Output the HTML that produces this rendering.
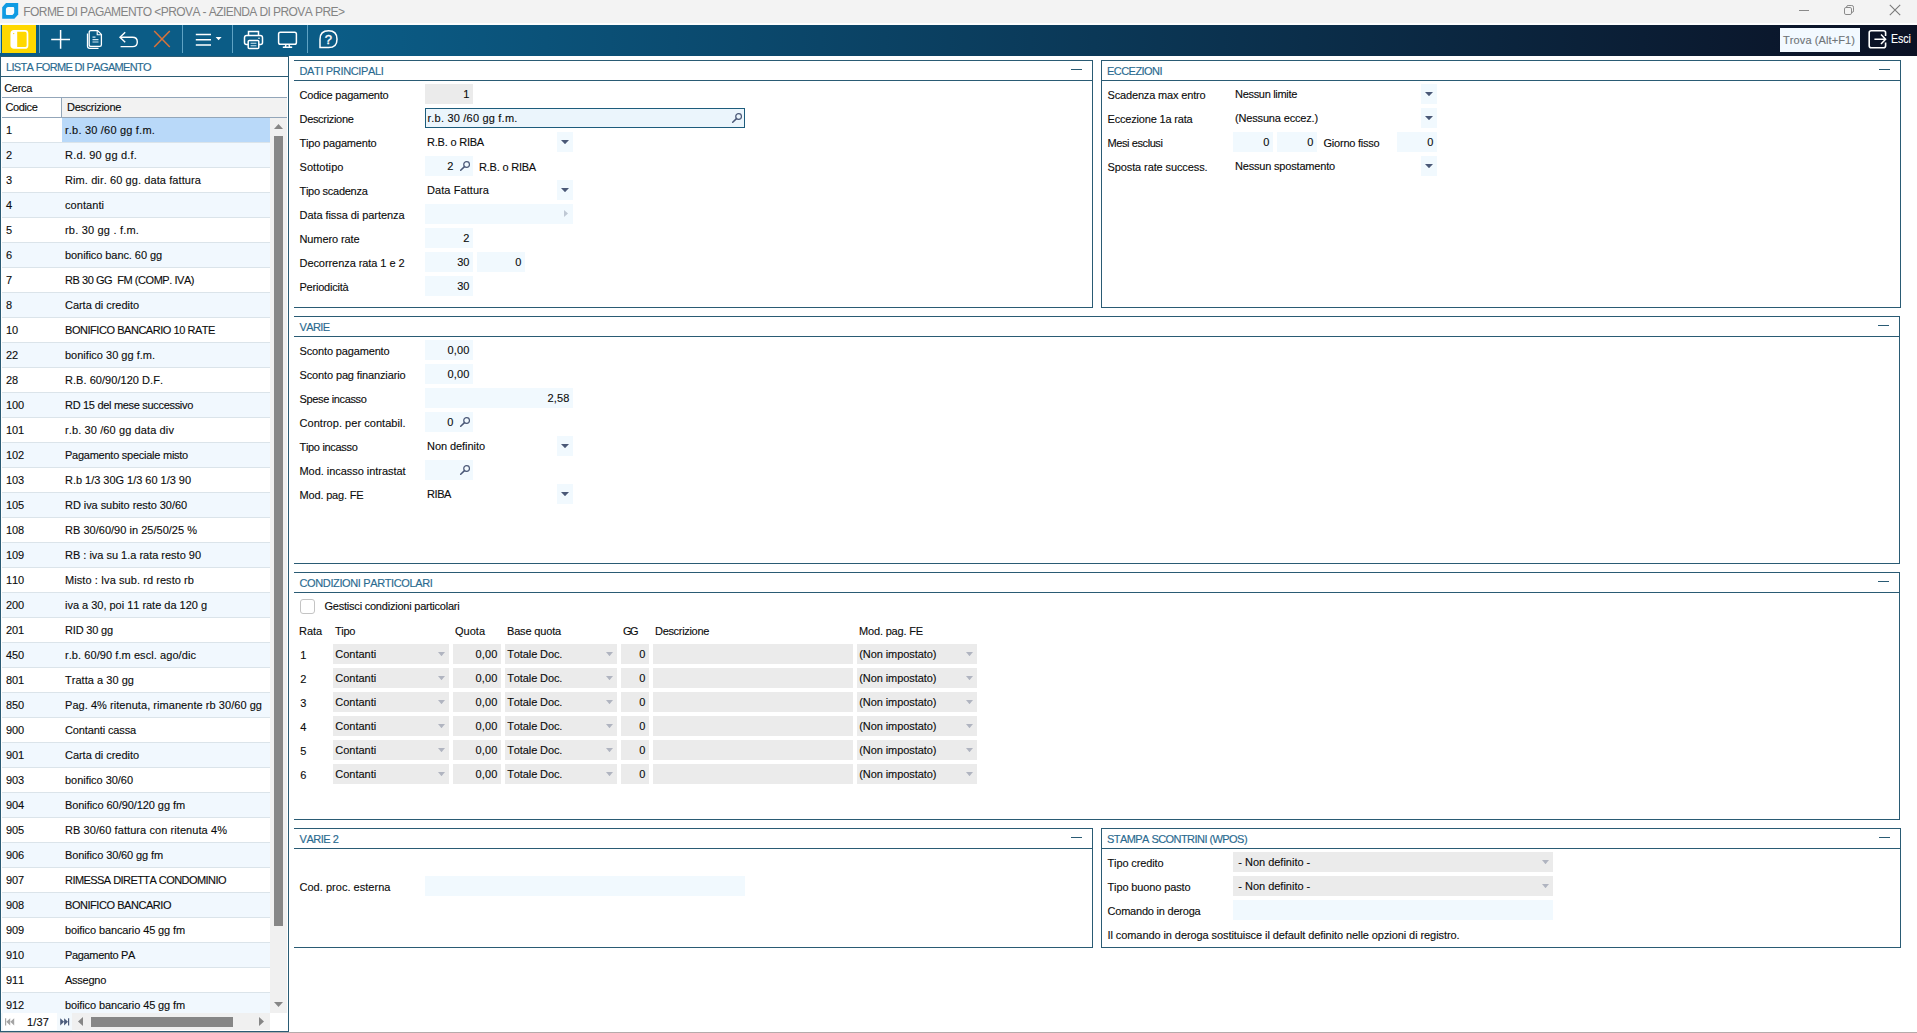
<!DOCTYPE html>
<html><head><meta charset="utf-8"><title>FORME DI PAGAMENTO</title>
<style>
html,body{margin:0;padding:0;}
body{width:1917px;height:1033px;overflow:hidden;background:#fff;position:relative;font-family:"Liberation Sans",sans-serif;font-size:11px;color:#1a1a1a;}
.a{position:absolute;white-space:nowrap;font-kerning:none;}
.t{font-size:11px;letter-spacing:-0.2px;color:#0c0c0c;-webkit-text-stroke-width:0.12px;}
.pt{font-size:11px;letter-spacing:-0.5px;color:#2a6a90;-webkit-text-stroke-width:0.15px;}
.ttl{font-size:12px;color:#848484;letter-spacing:-0.35px;}
</style></head><body>

<div class="a" style="left:0px;top:0px;width:1917px;height:25px;background:#f3f3f3;"></div>
<div class="a" style="left:0px;top:23.4px;width:1917px;height:1.6px;background:#fdfdfd;"></div>
<svg class="a" style="left:2px;top:3px" width="17" height="16" viewBox="0 0 17 16"><path d="M0.2 4.2 L4 0 H16.2 V11.6 L12.4 15.8 H0.2 Z" fill="#0f9be3"/><path d="M3.9 6.2 Q3.9 5.3 4.6 4.7 L5.2 4.2 Q5.6 3.9 6.4 3.9 H11.2 Q12.2 3.9 12.2 4.9 V9.4 Q12.2 10.2 11.6 10.8 L11 11.4 Q10.5 11.9 9.6 11.9 H4.9 Q3.9 11.9 3.9 10.9 Z" fill="#f8fbfd"/></svg>
<div class="a ttl" style="left:23.3px;top:1.5px;line-height:20px;letter-spacing:-0.579px;">FORME DI PAGAMENTO &lt;PROVA - AZIENDA DI PROVA PRE&gt;</div>
<div class="a" style="left:1799px;top:10px;width:10px;height:1px;background:#8a8a8a;"></div>
<svg class="a" style="left:1844px;top:5px" width="10" height="10" viewBox="0 0 10 10"><rect x="0.5" y="2.5" width="7" height="7" rx="1.4" fill="none" stroke="#8a8a8a"/><path d="M2.6 2.5 V2 Q2.6 0.5 4.1 0.5 H7.8 Q9.5 0.5 9.5 2.2 V5.9 Q9.5 7.4 8 7.4 H7.6" fill="none" stroke="#8a8a8a"/></svg>
<svg class="a" style="left:1889px;top:4px" width="12" height="12" viewBox="0 0 12 12"><path d="M0.8 0.8 L11.2 11.2 M11.2 0.8 L0.8 11.2" stroke="#7a7a7a" stroke-width="1.1"/></svg>
<div class="a" style="left:0px;top:25px;width:1917px;height:31px;background:linear-gradient(90deg,#0b5c86 0%,#0b5c86 17.5%,#0b1124 100%);"></div>
<div class="a" style="left:0px;top:25px;width:1px;height:28px;background:#8fd0ee;"></div>
<div class="a" style="left:2px;top:25px;width:34px;height:28px;background:#ffd800;"></div>
<svg class="a" style="left:10px;top:29px" width="20" height="21" viewBox="0 0 20 21"><rect x="1.3" y="1.9" width="16.2" height="17" rx="2.5" fill="none" stroke="#fff" stroke-width="1.7"/><path d="M1.3 4.4 Q1.3 1.9 3.8 1.9 H7.2 V18.9 H3.8 Q1.3 18.9 1.3 16.4 Z" fill="#fff"/><circle cx="3.7" cy="4.6" r="0.7" fill="#ffd800"/></svg>
<div class="a" style="left:39px;top:25px;width:1px;height:28px;background:#5fa3c4;"></div>
<div class="a" style="left:182px;top:25px;width:1px;height:28px;background:#5fa3c4;"></div>
<div class="a" style="left:232px;top:25px;width:1px;height:28px;background:#5fa3c4;"></div>
<div class="a" style="left:307px;top:25px;width:1px;height:28px;background:#5fa3c4;"></div>
<svg class="a" style="left:50px;top:29px" width="21" height="21" viewBox="0 0 21 21"><path d="M10.6 1 V19.8 M1.2 10.4 H20" stroke="#fff" stroke-width="1.5" fill="none"/></svg>
<svg class="a" style="left:86px;top:29px" width="17" height="21" viewBox="0 0 17 21"><path d="M3.2 3.2 Q3.2 1.6 4.8 1.6 H11.6 L15.4 5.4 V15.8 Q15.4 17.4 13.8 17.4 H4.8 Q3.2 17.4 3.2 15.8 Z" fill="none" stroke="#fff" stroke-width="1.3"/><path d="M11.2 1.8 V5.8 H15.2" fill="none" stroke="#fff" stroke-width="1.1"/><path d="M1.5 4.5 V17 Q1.5 19.3 3.8 19.3 H12.5" fill="none" stroke="#fff" stroke-width="1.3"/><path d="M6.5 8.2 H9.5 M6.5 10.6 H12.5 M6.5 13 H12.5" stroke="#cfe6f2" stroke-width="1.2"/></svg>
<svg class="a" style="left:118px;top:30px" width="21" height="19" viewBox="0 0 21 19"><path d="M7.2 2.2 L2 7.3 L7.2 12.2" fill="none" stroke="#fff" stroke-width="1.4" stroke-linejoin="miter"/><path d="M2.4 7.3 H14.5 Q19.3 7.3 19.3 12 Q19.3 16.6 14.5 16.6 H2.6" fill="none" stroke="#fff" stroke-width="1.4"/></svg>
<svg class="a" style="left:153px;top:30px" width="18" height="18" viewBox="0 0 18 18"><path d="M1.2 1 L16.8 17 M16.8 1 L1.2 17" stroke="#d9733a" stroke-width="1.5"/></svg>
<svg class="a" style="left:195px;top:33px" width="28" height="14" viewBox="0 0 28 14"><path d="M0.8 1.6 H16 M0.8 6.7 H16 M0.8 11.9 H16" stroke="#fff" stroke-width="1.5"/><path d="M20.6 4 H26.6 L23.6 7.2 Z" fill="#fff"/></svg>
<svg class="a" style="left:243px;top:30px" width="21" height="20" viewBox="0 0 21 20"><path d="M5.5 5.5 V1.5 H15.5 V5.5" fill="none" stroke="#fff" stroke-width="1.5"/><path d="M5 14.5 H3.5 Q1.5 14.5 1.5 12.5 V7.8 Q1.5 5.6 3.7 5.6 H17.3 Q19.5 5.6 19.5 7.8 V12.5 Q19.5 14.5 17.5 14.5 H16" fill="none" stroke="#fff" stroke-width="1.5"/><rect x="5.2" y="10.6" width="10.6" height="7.8" rx="1" fill="none" stroke="#fff" stroke-width="1.5"/><path d="M7.6 13.3 H13.4 M7.6 15.7 H13.4" stroke="#cfe6f2" stroke-width="1.1"/><circle cx="16" cy="8.2" r="0.8" fill="#fff"/></svg>
<svg class="a" style="left:277px;top:31px" width="21" height="18" viewBox="0 0 21 18"><rect x="1.6" y="1.3" width="17.8" height="12" rx="1.8" fill="none" stroke="#fff" stroke-width="1.5"/><path d="M9 13.5 L8.3 16 M12 13.5 L12.7 16 M5.8 16.3 H15.2" stroke="#fff" stroke-width="1.4" fill="none"/></svg>
<svg class="a" style="left:318px;top:29px" width="21" height="21" viewBox="0 0 21 21"><path d="M2 18.6 V10.2 Q2 1.8 10.6 1.8 Q19 1.8 19 10.2 Q19 18.6 10.6 18.6 Z" fill="none" stroke="#fff" stroke-width="1.5"/></svg>
<div class="a t" style="left:324.8px;top:29px;line-height:22px;color:#fff;font-size:13px;-webkit-text-stroke-width:0.4px;letter-spacing:0;">?</div>
<div class="a" style="left:1780px;top:28px;width:80px;height:24px;background:#f2f9ff;"></div>
<div class="a t" style="left:1783px;top:30px;line-height:20px;letter-spacing:0.1px;color:#6f7478;">Trova (Alt+F1)</div>
<svg class="a" style="left:1867px;top:29px" width="20" height="21" viewBox="-0.4 0 20 21"><path d="M18.2 7 V3.8 Q18.2 1.8 16.2 1.8 H3.8 Q1.8 1.8 1.8 3.8 V16.8 Q1.8 18.8 3.8 18.8 H16.2 Q18.2 18.8 18.2 16.8 V13.6" fill="none" stroke="#fff" stroke-width="1.6"/><path d="M7 10.3 H18 M13.6 5.6 L18.2 10.3 L13.6 15" fill="none" stroke="#fff" stroke-width="1.5"/></svg>
<div class="a t" style="left:1891.2px;top:28.5px;line-height:20px;color:#fff;font-size:12px;letter-spacing:0;transform:scaleX(0.88);transform-origin:0 0;">Esci</div>
<div class="a" style="left:0px;top:56px;width:289px;height:976px;box-sizing:border-box;border:1px solid #2a5b74;border-top:1px solid #2a5b74;"></div>
<div class="a" style="left:0px;top:56px;width:1px;height:976px;background:#2a5b74;"></div>
<div class="a" style="left:1px;top:76px;width:287px;height:1px;background:#2a5b74;"></div>
<div class="a pt" style="left:6px;top:57px;line-height:20px;letter-spacing:-0.656px;">LISTA FORME DI PAGAMENTO</div>
<div class="a t" style="left:4.2px;top:78px;line-height:20px;letter-spacing:-0.268px;">Cerca</div>
<div class="a" style="left:2px;top:97px;width:285px;height:1px;background:#93a6b9;"></div>
<div class="a" style="left:62px;top:98px;width:225px;height:19px;background:#f2f2f2;"></div>
<div class="a" style="left:61px;top:98px;width:1px;height:19px;background:#93a6b9;"></div>
<div class="a t" style="left:5.4px;top:97px;line-height:20px;letter-spacing:-0.373px;">Codice</div>
<div class="a t" style="left:67px;top:97px;line-height:20px;letter-spacing:-0.315px;">Descrizione</div>
<div class="a" style="left:2px;top:117px;width:285px;height:1px;background:#93a6b9;"></div>
<div class="a" style="left:2px;top:118px;width:268px;height:895px;overflow:hidden;">
<div class="a" style="left:0;top:0px;width:269px;height:24px;background:#fff;border-bottom:1px solid #dbe4ea;"></div>
<div class="a" style="left:60px;top:0px;width:209px;height:24px;background:#b9d9f9;"></div>
<div class="a t" style="left:4px;top:0px;line-height:24px;letter-spacing:-0.118px;">1</div>
<div class="a t" style="left:63px;top:0px;line-height:24px;white-space:pre;letter-spacing:0.199px;">r.b. 30 /60 gg f.m.</div>
<div class="a" style="left:0;top:25px;width:269px;height:24px;background:#f1f8fe;border-bottom:1px solid #dbe4ea;"></div>
<div class="a t" style="left:4px;top:25px;line-height:24px;letter-spacing:-0.118px;">2</div>
<div class="a t" style="left:63px;top:25px;line-height:24px;white-space:pre;letter-spacing:0.193px;">R.d. 90 gg d.f.</div>
<div class="a" style="left:0;top:50px;width:269px;height:24px;background:#fff;border-bottom:1px solid #dbe4ea;"></div>
<div class="a t" style="left:4px;top:50px;line-height:24px;letter-spacing:-0.118px;">3</div>
<div class="a t" style="left:63px;top:50px;line-height:24px;white-space:pre;letter-spacing:0.093px;">Rim. dir. 60 gg. data fattura</div>
<div class="a" style="left:0;top:75px;width:269px;height:24px;background:#f1f8fe;border-bottom:1px solid #dbe4ea;"></div>
<div class="a t" style="left:4px;top:75px;line-height:24px;letter-spacing:-0.118px;">4</div>
<div class="a t" style="left:63px;top:75px;line-height:24px;white-space:pre;letter-spacing:0.059px;">contanti</div>
<div class="a" style="left:0;top:100px;width:269px;height:24px;background:#fff;border-bottom:1px solid #dbe4ea;"></div>
<div class="a t" style="left:4px;top:100px;line-height:24px;letter-spacing:-0.118px;">5</div>
<div class="a t" style="left:63px;top:100px;line-height:24px;white-space:pre;letter-spacing:0.193px;">rb. 30 gg . f.m.</div>
<div class="a" style="left:0;top:125px;width:269px;height:24px;background:#f1f8fe;border-bottom:1px solid #dbe4ea;"></div>
<div class="a t" style="left:4px;top:125px;line-height:24px;letter-spacing:-0.118px;">6</div>
<div class="a t" style="left:63px;top:125px;line-height:24px;white-space:pre;letter-spacing:-0.073px;">bonifico banc. 60 gg</div>
<div class="a" style="left:0;top:150px;width:269px;height:24px;background:#fff;border-bottom:1px solid #dbe4ea;"></div>
<div class="a t" style="left:4px;top:150px;line-height:24px;letter-spacing:-0.118px;">7</div>
<div class="a t" style="left:63px;top:150px;line-height:24px;white-space:pre;letter-spacing:-0.457px;">RB 30 GG  FM (COMP. IVA)</div>
<div class="a" style="left:0;top:175px;width:269px;height:24px;background:#f1f8fe;border-bottom:1px solid #dbe4ea;"></div>
<div class="a t" style="left:4px;top:175px;line-height:24px;letter-spacing:-0.118px;">8</div>
<div class="a t" style="left:63px;top:175px;line-height:24px;white-space:pre;letter-spacing:-0.037px;">Carta di credito</div>
<div class="a" style="left:0;top:200px;width:269px;height:24px;background:#fff;border-bottom:1px solid #dbe4ea;"></div>
<div class="a t" style="left:4px;top:200px;line-height:24px;letter-spacing:-0.118px;">10</div>
<div class="a t" style="left:63px;top:200px;line-height:24px;white-space:pre;letter-spacing:-0.455px;">BONIFICO BANCARIO 10 RATE</div>
<div class="a" style="left:0;top:225px;width:269px;height:24px;background:#f1f8fe;border-bottom:1px solid #dbe4ea;"></div>
<div class="a t" style="left:4px;top:225px;line-height:24px;letter-spacing:-0.118px;">22</div>
<div class="a t" style="left:63px;top:225px;line-height:24px;white-space:pre;letter-spacing:0.006px;">bonifico 30 gg f.m.</div>
<div class="a" style="left:0;top:250px;width:269px;height:24px;background:#fff;border-bottom:1px solid #dbe4ea;"></div>
<div class="a t" style="left:4px;top:250px;line-height:24px;letter-spacing:-0.118px;">28</div>
<div class="a t" style="left:63px;top:250px;line-height:24px;white-space:pre;letter-spacing:0.041px;">R.B. 60/90/120 D.F.</div>
<div class="a" style="left:0;top:275px;width:269px;height:24px;background:#f1f8fe;border-bottom:1px solid #dbe4ea;"></div>
<div class="a t" style="left:4px;top:275px;line-height:24px;letter-spacing:-0.118px;">100</div>
<div class="a t" style="left:63px;top:275px;line-height:24px;white-space:pre;letter-spacing:-0.309px;">RD 15 del mese successivo</div>
<div class="a" style="left:0;top:300px;width:269px;height:24px;background:#fff;border-bottom:1px solid #dbe4ea;"></div>
<div class="a t" style="left:4px;top:300px;line-height:24px;letter-spacing:-0.118px;">101</div>
<div class="a t" style="left:63px;top:300px;line-height:24px;white-space:pre;letter-spacing:0.113px;">r.b. 30 /60 gg data div</div>
<div class="a" style="left:0;top:325px;width:269px;height:24px;background:#f1f8fe;border-bottom:1px solid #dbe4ea;"></div>
<div class="a t" style="left:4px;top:325px;line-height:24px;letter-spacing:-0.118px;">102</div>
<div class="a t" style="left:63px;top:325px;line-height:24px;white-space:pre;letter-spacing:-0.251px;">Pagamento speciale misto</div>
<div class="a" style="left:0;top:350px;width:269px;height:24px;background:#fff;border-bottom:1px solid #dbe4ea;"></div>
<div class="a t" style="left:4px;top:350px;line-height:24px;letter-spacing:-0.118px;">103</div>
<div class="a t" style="left:63px;top:350px;line-height:24px;white-space:pre;letter-spacing:-0.024px;">R.b 1/3 30G 1/3 60 1/3 90</div>
<div class="a" style="left:0;top:375px;width:269px;height:24px;background:#f1f8fe;border-bottom:1px solid #dbe4ea;"></div>
<div class="a t" style="left:4px;top:375px;line-height:24px;letter-spacing:-0.118px;">105</div>
<div class="a t" style="left:63px;top:375px;line-height:24px;white-space:pre;letter-spacing:-0.06px;">RD iva subito resto 30/60</div>
<div class="a" style="left:0;top:400px;width:269px;height:24px;background:#fff;border-bottom:1px solid #dbe4ea;"></div>
<div class="a t" style="left:4px;top:400px;line-height:24px;letter-spacing:-0.118px;">108</div>
<div class="a t" style="left:63px;top:400px;line-height:24px;white-space:pre;letter-spacing:0.021px;">RB 30/60/90 in 25/50/25 %</div>
<div class="a" style="left:0;top:425px;width:269px;height:24px;background:#f1f8fe;border-bottom:1px solid #dbe4ea;"></div>
<div class="a t" style="left:4px;top:425px;line-height:24px;letter-spacing:-0.118px;">109</div>
<div class="a t" style="left:63px;top:425px;line-height:24px;white-space:pre;letter-spacing:-0.012px;">RB : iva su 1.a rata resto 90</div>
<div class="a" style="left:0;top:450px;width:269px;height:24px;background:#fff;border-bottom:1px solid #dbe4ea;"></div>
<div class="a t" style="left:4px;top:450px;line-height:24px;letter-spacing:-0.118px;">110</div>
<div class="a t" style="left:63px;top:450px;line-height:24px;white-space:pre;letter-spacing:0.066px;">Misto : Iva sub. rd resto rb</div>
<div class="a" style="left:0;top:475px;width:269px;height:24px;background:#f1f8fe;border-bottom:1px solid #dbe4ea;"></div>
<div class="a t" style="left:4px;top:475px;line-height:24px;letter-spacing:-0.118px;">200</div>
<div class="a t" style="left:63px;top:475px;line-height:24px;white-space:pre;letter-spacing:-0.017px;">iva a 30, poi 11 rate da 120 g</div>
<div class="a" style="left:0;top:500px;width:269px;height:24px;background:#fff;border-bottom:1px solid #dbe4ea;"></div>
<div class="a t" style="left:4px;top:500px;line-height:24px;letter-spacing:-0.118px;">201</div>
<div class="a t" style="left:63px;top:500px;line-height:24px;white-space:pre;letter-spacing:-0.17px;">RID 30 gg</div>
<div class="a" style="left:0;top:525px;width:269px;height:24px;background:#f1f8fe;border-bottom:1px solid #dbe4ea;"></div>
<div class="a t" style="left:4px;top:525px;line-height:24px;letter-spacing:-0.118px;">450</div>
<div class="a t" style="left:63px;top:525px;line-height:24px;white-space:pre;letter-spacing:0.071px;">r.b. 60/90 f.m escl. ago/dic</div>
<div class="a" style="left:0;top:550px;width:269px;height:24px;background:#fff;border-bottom:1px solid #dbe4ea;"></div>
<div class="a t" style="left:4px;top:550px;line-height:24px;letter-spacing:-0.118px;">801</div>
<div class="a t" style="left:63px;top:550px;line-height:24px;white-space:pre;letter-spacing:0.037px;">Tratta a 30 gg</div>
<div class="a" style="left:0;top:575px;width:269px;height:24px;background:#f1f8fe;border-bottom:1px solid #dbe4ea;"></div>
<div class="a t" style="left:4px;top:575px;line-height:24px;letter-spacing:-0.118px;">850</div>
<div class="a t" style="left:63px;top:575px;line-height:24px;white-space:pre;letter-spacing:0.05px;">Pag. 4% ritenuta, rimanente rb 30/60 gg</div>
<div class="a" style="left:0;top:600px;width:269px;height:24px;background:#fff;border-bottom:1px solid #dbe4ea;"></div>
<div class="a t" style="left:4px;top:600px;line-height:24px;letter-spacing:-0.118px;">900</div>
<div class="a t" style="left:63px;top:600px;line-height:24px;white-space:pre;letter-spacing:-0.126px;">Contanti cassa</div>
<div class="a" style="left:0;top:625px;width:269px;height:24px;background:#f1f8fe;border-bottom:1px solid #dbe4ea;"></div>
<div class="a t" style="left:4px;top:625px;line-height:24px;letter-spacing:-0.118px;">901</div>
<div class="a t" style="left:63px;top:625px;line-height:24px;white-space:pre;letter-spacing:-0.037px;">Carta di credito</div>
<div class="a" style="left:0;top:650px;width:269px;height:24px;background:#fff;border-bottom:1px solid #dbe4ea;"></div>
<div class="a t" style="left:4px;top:650px;line-height:24px;letter-spacing:-0.118px;">903</div>
<div class="a t" style="left:63px;top:650px;line-height:24px;white-space:pre;letter-spacing:-0.036px;">bonifico 30/60</div>
<div class="a" style="left:0;top:675px;width:269px;height:24px;background:#f1f8fe;border-bottom:1px solid #dbe4ea;"></div>
<div class="a t" style="left:4px;top:675px;line-height:24px;letter-spacing:-0.118px;">904</div>
<div class="a t" style="left:63px;top:675px;line-height:24px;white-space:pre;letter-spacing:-0.071px;">Bonifico 60/90/120 gg fm</div>
<div class="a" style="left:0;top:700px;width:269px;height:24px;background:#fff;border-bottom:1px solid #dbe4ea;"></div>
<div class="a t" style="left:4px;top:700px;line-height:24px;letter-spacing:-0.118px;">905</div>
<div class="a t" style="left:63px;top:700px;line-height:24px;white-space:pre;letter-spacing:0.075px;">RB 30/60 fattura con ritenuta 4%</div>
<div class="a" style="left:0;top:725px;width:269px;height:24px;background:#f1f8fe;border-bottom:1px solid #dbe4ea;"></div>
<div class="a t" style="left:4px;top:725px;line-height:24px;letter-spacing:-0.118px;">906</div>
<div class="a t" style="left:63px;top:725px;line-height:24px;white-space:pre;letter-spacing:-0.114px;">Bonifico 30/60 gg fm</div>
<div class="a" style="left:0;top:750px;width:269px;height:24px;background:#fff;border-bottom:1px solid #dbe4ea;"></div>
<div class="a t" style="left:4px;top:750px;line-height:24px;letter-spacing:-0.118px;">907</div>
<div class="a t" style="left:63px;top:750px;line-height:24px;white-space:pre;letter-spacing:-0.554px;">RIMESSA DIRETTA CONDOMINIO</div>
<div class="a" style="left:0;top:775px;width:269px;height:24px;background:#f1f8fe;border-bottom:1px solid #dbe4ea;"></div>
<div class="a t" style="left:4px;top:775px;line-height:24px;letter-spacing:-0.118px;">908</div>
<div class="a t" style="left:63px;top:775px;line-height:24px;white-space:pre;letter-spacing:-0.452px;">BONIFICO BANCARIO</div>
<div class="a" style="left:0;top:800px;width:269px;height:24px;background:#fff;border-bottom:1px solid #dbe4ea;"></div>
<div class="a t" style="left:4px;top:800px;line-height:24px;letter-spacing:-0.118px;">909</div>
<div class="a t" style="left:63px;top:800px;line-height:24px;white-space:pre;letter-spacing:-0.116px;">boifico bancario 45 gg fm</div>
<div class="a" style="left:0;top:825px;width:269px;height:24px;background:#f1f8fe;border-bottom:1px solid #dbe4ea;"></div>
<div class="a t" style="left:4px;top:825px;line-height:24px;letter-spacing:-0.118px;">910</div>
<div class="a t" style="left:63px;top:825px;line-height:24px;white-space:pre;letter-spacing:-0.333px;">Pagamento PA</div>
<div class="a" style="left:0;top:850px;width:269px;height:24px;background:#fff;border-bottom:1px solid #dbe4ea;"></div>
<div class="a t" style="left:4px;top:850px;line-height:24px;letter-spacing:-0.118px;">911</div>
<div class="a t" style="left:63px;top:850px;line-height:24px;white-space:pre;letter-spacing:-0.258px;">Assegno</div>
<div class="a" style="left:0;top:875px;width:269px;height:24px;background:#f1f8fe;border-bottom:1px solid #dbe4ea;"></div>
<div class="a t" style="left:4px;top:875px;line-height:24px;letter-spacing:-0.118px;">912</div>
<div class="a t" style="left:63px;top:875px;line-height:24px;white-space:pre;letter-spacing:-0.116px;">boifico bancario 45 gg fm</div>
</div>
<div class="a" style="left:270px;top:118px;width:17px;height:895px;background:#f0f0f0;"></div>
<div class="a" style="left:274px;top:136px;width:9px;height:790px;background:#868686;"></div>
<svg class="a" style="left:274px;top:124px" width="9" height="5" viewBox="0 0 9 5"><path d="M0 5 L4.5 0 L9 5 Z" fill="#868686"/></svg>
<svg class="a" style="left:274px;top:1002px" width="9" height="5" viewBox="0 0 9 5"><path d="M0 0 L4.5 5 L9 0 Z" fill="#868686"/></svg>
<div class="a" style="left:1px;top:1013px;width:71px;height:18px;background:#f3f9fd;"></div>
<div class="a" style="left:3px;top:1013px;width:54px;height:17px;background:#fff;"></div>
<div class="a" style="left:72px;top:1013px;width:198px;height:17px;background:#f0f0f0;"></div>
<svg class="a" style="left:5px;top:1018px" width="10" height="8" viewBox="0 0 10 8"><path d="M0.6 0.2 V7.4" stroke="#a4a4a4" stroke-width="1.2"/><path d="M5.2 0.2 V7.4 L1.3 3.8 Z M9.2 0.2 V7.4 L5.3 3.8 Z" fill="#a4a4a4"/></svg>
<div class="a t" style="left:27px;top:1012px;line-height:20px;letter-spacing:0.148px;">1/37</div>
<svg class="a" style="left:60px;top:1018px" width="10" height="8" viewBox="0 0 10 8"><path d="M8.6 0.2 V7.4" stroke="#4c5c7c" stroke-width="1.2"/><path d="M0.2 0.2 V7.4 L4.1 3.8 Z M4.1 0.2 V7.4 L8 3.8 Z" fill="#4c5c7c"/></svg>
<svg class="a" style="left:78px;top:1017px" width="5" height="9" viewBox="0 0 5 9"><path d="M5 0 V9 L0 4.5 Z" fill="#868686"/></svg>
<div class="a" style="left:91px;top:1017px;width:142px;height:10px;background:#868686;"></div>
<svg class="a" style="left:259px;top:1017px" width="5" height="9" viewBox="0 0 5 9"><path d="M0 0 V9 L5 4.5 Z" fill="#868686"/></svg>
<div class="a" style="left:0px;top:1032px;width:1917px;height:1px;background:#b5abab;"></div>
<div class="a" style="left:0px;top:1031px;width:289px;height:1px;background:#2a5b74;"></div>
<div class="a" style="left:294px;top:60px;width:799px;height:248px;box-sizing:border-box;border-top:1px solid #2a5b74;border-right:1px solid #2a5b74;border-bottom:1px solid #2a5b74;"></div>
<div class="a" style="left:294px;top:80px;width:799px;height:1px;background:#2a5b74;"></div>
<div class="a pt" style="left:299.5px;top:61px;line-height:20px;letter-spacing:-0.349px;">DATI PRINCIPALI</div>
<div class="a" style="left:1071px;top:69px;width:11px;height:1px;background:#2a5b74;height:1.3px;"></div>
<div class="a t" style="left:299.5px;top:85px;line-height:20px;letter-spacing:-0.209px;">Codice pagamento</div>
<div class="a t" style="left:299.5px;top:109px;line-height:20px;letter-spacing:-0.315px;">Descrizione</div>
<div class="a t" style="left:299.5px;top:133px;line-height:20px;letter-spacing:-0.178px;">Tipo pagamento</div>
<div class="a t" style="left:299.5px;top:157px;line-height:20px;letter-spacing:0.064px;">Sottotipo</div>
<div class="a t" style="left:299.5px;top:181px;line-height:20px;letter-spacing:-0.273px;">Tipo scadenza</div>
<div class="a t" style="left:299.5px;top:205px;line-height:20px;letter-spacing:-0.063px;">Data fissa di partenza</div>
<div class="a t" style="left:299.5px;top:229px;line-height:20px;letter-spacing:-0.103px;">Numero rate</div>
<div class="a t" style="left:299.5px;top:253px;line-height:20px;letter-spacing:-0.066px;">Decorrenza rata 1 e 2</div>
<div class="a t" style="left:299.5px;top:277px;line-height:20px;letter-spacing:-0.214px;">Periodicità</div>
<div class="a" style="left:425px;top:84px;width:48px;height:20px;background:#ebebeb;"></div>
<div class="a t" style="right:1447.82px;top:84px;line-height:20px;letter-spacing:-0.118px;">1</div>
<div class="a" style="left:425px;top:108px;width:320px;height:20px;background:#ebf5fc;box-sizing:border-box;border:1px solid #1d5c7c;"></div>
<div class="a t" style="left:427.5px;top:108px;line-height:20px;letter-spacing:0.199px;">r.b. 30 /60 gg f.m.</div>
<svg class="a" style="left:731px;top:112px" width="12" height="12" viewBox="0 0 12 12"><circle cx="7.6" cy="4.5" r="2.85" fill="none" stroke="#4a5877" stroke-width="1.2"/><path d="M5.5 6.6 L1.7 10.3" stroke="#4a5877" stroke-width="1.5" stroke-linecap="round"/></svg>
<div class="a" style="left:557px;top:132px;width:16px;height:20px;background:#f1f9fe;"></div>
<svg class="a" style="left:561.0px;top:140px" width="8" height="4" viewBox="0 0 8 4"><path d="M0 0 H8 L4.0 4.2 Z" fill="#4a5877"/></svg>
<div class="a t" style="left:427px;top:132px;line-height:20px;letter-spacing:-0.209px;">R.B. o RIBA</div>
<div class="a" style="left:425px;top:156px;width:48px;height:20px;background:#f1f9fe;"></div>
<div class="a t" style="right:1463.82px;top:156px;line-height:20px;letter-spacing:-0.118px;">2</div>
<svg class="a" style="left:459px;top:160px" width="12" height="12" viewBox="0 0 12 12"><circle cx="7.6" cy="4.5" r="2.85" fill="none" stroke="#4a5877" stroke-width="1.2"/><path d="M5.5 6.6 L1.7 10.3" stroke="#4a5877" stroke-width="1.5" stroke-linecap="round"/></svg>
<div class="a t" style="left:479px;top:157px;line-height:20px;letter-spacing:-0.209px;">R.B. o RIBA</div>
<div class="a" style="left:557px;top:180px;width:16px;height:20px;background:#f1f9fe;"></div>
<svg class="a" style="left:561.0px;top:188px" width="8" height="4" viewBox="0 0 8 4"><path d="M0 0 H8 L4.0 4.2 Z" fill="#4a5877"/></svg>
<div class="a t" style="left:427px;top:180px;line-height:20px;letter-spacing:0.072px;">Data Fattura</div>
<div class="a" style="left:425px;top:204px;width:148px;height:20px;background:#f1f9fe;"></div>
<svg class="a" style="left:564px;top:210px" width="4" height="7" viewBox="0 0 4 7"><path d="M0 0 L4 3.5 L0 7 Z" fill="#bfc8d4"/></svg>
<div class="a" style="left:425px;top:228px;width:48px;height:20px;background:#f1f9fe;"></div>
<div class="a t" style="right:1447.82px;top:228px;line-height:20px;letter-spacing:-0.118px;">2</div>
<div class="a" style="left:425px;top:252px;width:48px;height:20px;background:#f1f9fe;"></div>
<div class="a t" style="right:1447.82px;top:252px;line-height:20px;letter-spacing:-0.118px;">30</div>
<div class="a" style="left:477px;top:252px;width:48px;height:20px;background:#f1f9fe;"></div>
<div class="a t" style="right:1395.82px;top:252px;line-height:20px;letter-spacing:-0.118px;">0</div>
<div class="a" style="left:425px;top:276px;width:48px;height:20px;background:#f1f9fe;"></div>
<div class="a t" style="right:1447.82px;top:276px;line-height:20px;letter-spacing:-0.118px;">30</div>
<div class="a" style="left:1101px;top:60px;width:800px;height:248px;box-sizing:border-box;border-top:1px solid #2a5b74;border-right:1px solid #2a5b74;border-bottom:1px solid #2a5b74;border-left:1px solid #2a5b74;"></div>
<div class="a" style="left:1101px;top:80px;width:800px;height:1px;background:#2a5b74;"></div>
<div class="a pt" style="left:1107px;top:61px;line-height:20px;letter-spacing:-0.544px;">ECCEZIONI</div>
<div class="a" style="left:1879px;top:69px;width:11px;height:1px;background:#2a5b74;height:1.3px;"></div>
<div class="a t" style="left:1107.5px;top:85px;line-height:20px;letter-spacing:-0.161px;">Scadenza max entro</div>
<div class="a t" style="left:1107.5px;top:109px;line-height:20px;letter-spacing:-0.18px;">Eccezione 1a rata</div>
<div class="a t" style="left:1107.5px;top:133px;line-height:20px;letter-spacing:-0.409px;">Mesi esclusi</div>
<div class="a t" style="left:1107.5px;top:157px;line-height:20px;letter-spacing:-0.105px;">Sposta rate success.</div>
<div class="a" style="left:1421px;top:84px;width:16px;height:20px;background:#f1f9fe;"></div>
<svg class="a" style="left:1425.0px;top:92px" width="8" height="4" viewBox="0 0 8 4"><path d="M0 0 H8 L4.0 4.2 Z" fill="#4a5877"/></svg>
<div class="a t" style="left:1235px;top:84px;line-height:20px;letter-spacing:-0.309px;">Nessun limite</div>
<div class="a" style="left:1421px;top:108px;width:16px;height:20px;background:#f1f9fe;"></div>
<svg class="a" style="left:1425.0px;top:116px" width="8" height="4" viewBox="0 0 8 4"><path d="M0 0 H8 L4.0 4.2 Z" fill="#4a5877"/></svg>
<div class="a t" style="left:1235px;top:108px;line-height:20px;letter-spacing:-0.162px;">(Nessuna eccez.)</div>
<div class="a" style="left:1233px;top:132px;width:40px;height:20px;background:#f1f9fe;"></div>
<div class="a t" style="right:647.82px;top:132px;line-height:20px;letter-spacing:-0.118px;">0</div>
<div class="a" style="left:1277px;top:132px;width:40px;height:20px;background:#f1f9fe;"></div>
<div class="a t" style="right:603.82px;top:132px;line-height:20px;letter-spacing:-0.118px;">0</div>
<div class="a t" style="left:1323.5px;top:133px;line-height:20px;letter-spacing:-0.224px;">Giorno fisso</div>
<div class="a" style="left:1397px;top:132px;width:40px;height:20px;background:#f1f9fe;"></div>
<div class="a t" style="right:483.82px;top:132px;line-height:20px;letter-spacing:-0.118px;">0</div>
<div class="a" style="left:1421px;top:156px;width:16px;height:20px;background:#f1f9fe;"></div>
<svg class="a" style="left:1425.0px;top:164px" width="8" height="4" viewBox="0 0 8 4"><path d="M0 0 H8 L4.0 4.2 Z" fill="#4a5877"/></svg>
<div class="a t" style="left:1235px;top:156px;line-height:20px;letter-spacing:-0.185px;">Nessun spostamento</div>
<div class="a" style="left:294px;top:316px;width:1606px;height:248px;box-sizing:border-box;border-top:1px solid #2a5b74;border-right:1px solid #2a5b74;border-bottom:1px solid #2a5b74;"></div>
<div class="a" style="left:294px;top:336px;width:1606px;height:1px;background:#2a5b74;"></div>
<div class="a pt" style="left:299.5px;top:317px;line-height:20px;letter-spacing:-0.602px;">VARIE</div>
<div class="a" style="left:1878px;top:325px;width:11px;height:1px;background:#2a5b74;height:1.3px;"></div>
<div class="a t" style="left:299.5px;top:341px;line-height:20px;letter-spacing:-0.147px;">Sconto pagamento</div>
<div class="a t" style="left:299.5px;top:365px;line-height:20px;letter-spacing:-0.13px;">Sconto pag finanziario</div>
<div class="a t" style="left:299.5px;top:389px;line-height:20px;letter-spacing:-0.349px;">Spese incasso</div>
<div class="a t" style="left:299.5px;top:413px;line-height:20px;letter-spacing:0.038px;">Controp. per contabil.</div>
<div class="a t" style="left:299.5px;top:437px;line-height:20px;letter-spacing:-0.313px;">Tipo incasso</div>
<div class="a t" style="left:299.5px;top:461px;line-height:20px;letter-spacing:-0.045px;">Mod. incasso intrastat</div>
<div class="a t" style="left:299.5px;top:485px;line-height:20px;letter-spacing:-0.169px;">Mod. pag. FE</div>
<div class="a" style="left:425px;top:340px;width:48px;height:20px;background:#f1f9fe;"></div>
<div class="a t" style="right:1447.55px;top:340px;line-height:20px;letter-spacing:0.148px;">0,00</div>
<div class="a" style="left:425px;top:364px;width:48px;height:20px;background:#f1f9fe;"></div>
<div class="a t" style="right:1447.55px;top:364px;line-height:20px;letter-spacing:0.148px;">0,00</div>
<div class="a" style="left:425px;top:388px;width:148px;height:20px;background:#f1f9fe;"></div>
<div class="a t" style="right:1347.55px;top:388px;line-height:20px;letter-spacing:0.148px;">2,58</div>
<div class="a" style="left:425px;top:412px;width:48px;height:20px;background:#f1f9fe;"></div>
<div class="a t" style="right:1463.82px;top:412px;line-height:20px;letter-spacing:-0.118px;">0</div>
<svg class="a" style="left:459px;top:416px" width="12" height="12" viewBox="0 0 12 12"><circle cx="7.6" cy="4.5" r="2.85" fill="none" stroke="#4a5877" stroke-width="1.2"/><path d="M5.5 6.6 L1.7 10.3" stroke="#4a5877" stroke-width="1.5" stroke-linecap="round"/></svg>
<div class="a" style="left:557px;top:436px;width:16px;height:20px;background:#f1f9fe;"></div>
<svg class="a" style="left:561.0px;top:444px" width="8" height="4" viewBox="0 0 8 4"><path d="M0 0 H8 L4.0 4.2 Z" fill="#4a5877"/></svg>
<div class="a t" style="left:427px;top:436px;line-height:20px;letter-spacing:-0.059px;">Non definito</div>
<div class="a" style="left:425px;top:460px;width:48px;height:20px;background:#f1f9fe;"></div>
<svg class="a" style="left:459px;top:464px" width="12" height="12" viewBox="0 0 12 12"><circle cx="7.6" cy="4.5" r="2.85" fill="none" stroke="#4a5877" stroke-width="1.2"/><path d="M5.5 6.6 L1.7 10.3" stroke="#4a5877" stroke-width="1.5" stroke-linecap="round"/></svg>
<div class="a" style="left:557px;top:484px;width:16px;height:20px;background:#f1f9fe;"></div>
<svg class="a" style="left:561.0px;top:492px" width="8" height="4" viewBox="0 0 8 4"><path d="M0 0 H8 L4.0 4.2 Z" fill="#4a5877"/></svg>
<div class="a t" style="left:427px;top:484px;line-height:20px;letter-spacing:-0.418px;">RIBA</div>
<div class="a" style="left:294px;top:572px;width:1606px;height:248px;box-sizing:border-box;border-top:1px solid #2a5b74;border-right:1px solid #2a5b74;border-bottom:1px solid #2a5b74;"></div>
<div class="a" style="left:294px;top:592px;width:1606px;height:1px;background:#2a5b74;"></div>
<div class="a pt" style="left:299.5px;top:573px;line-height:20px;letter-spacing:-0.372px;">CONDIZIONI PARTICOLARI</div>
<div class="a" style="left:1878px;top:581px;width:11px;height:1px;background:#2a5b74;height:1.3px;"></div>
<div class="a" style="left:300px;top:599px;width:15px;height:15px;background:#fff;box-sizing:border-box;border:1px solid #c4c4c4;border-radius:3px;"></div>
<div class="a t" style="left:324.5px;top:596px;line-height:20px;letter-spacing:-0.22px;">Gestisci condizioni particolari</div>
<div class="a t" style="left:299px;top:621px;line-height:20px;letter-spacing:-0.059px;">Rata</div>
<div class="a t" style="left:335px;top:621px;line-height:20px;letter-spacing:-0.35px;">Tipo</div>
<div class="a t" style="left:455px;top:621px;line-height:20px;letter-spacing:0.007px;">Quota</div>
<div class="a t" style="left:507px;top:621px;line-height:20px;letter-spacing:-0.166px;">Base quota</div>
<div class="a t" style="left:623px;top:621px;line-height:20px;letter-spacing:-1.556px;">GG</div>
<div class="a t" style="left:655px;top:621px;line-height:20px;letter-spacing:-0.315px;">Descrizione</div>
<div class="a t" style="left:859px;top:621px;line-height:20px;letter-spacing:-0.169px;">Mod. pag. FE</div>
<div class="a t" style="left:300.2px;top:645px;line-height:20px;letter-spacing:-0.118px;">1</div>
<div class="a" style="left:333px;top:644px;width:116px;height:20px;background:#ebebeb;"></div>
<svg class="a" style="left:438.0px;top:652.2px" width="7" height="4" viewBox="0 0 7 4"><path d="M0 0 H7 L3.5 4.2 Z" fill="#b0b4c0"/></svg>
<div class="a t" style="left:335.25px;top:644px;line-height:20px;letter-spacing:0.004px;">Contanti</div>
<div class="a" style="left:453px;top:644px;width:48px;height:20px;background:#ebebeb;"></div>
<div class="a t" style="right:1419.55px;top:644px;line-height:20px;letter-spacing:0.148px;">0,00</div>
<div class="a" style="left:505px;top:644px;width:112px;height:20px;background:#ebebeb;"></div>
<svg class="a" style="left:606.0px;top:652.2px" width="7" height="4" viewBox="0 0 7 4"><path d="M0 0 H7 L3.5 4.2 Z" fill="#b0b4c0"/></svg>
<div class="a t" style="left:507.25px;top:644px;line-height:20px;letter-spacing:-0.113px;">Totale Doc.</div>
<div class="a" style="left:621px;top:644px;width:28px;height:20px;background:#ebebeb;"></div>
<div class="a t" style="right:1271.82px;top:644px;line-height:20px;letter-spacing:-0.118px;">0</div>
<div class="a" style="left:653px;top:644px;width:200px;height:20px;background:#ebebeb;"></div>
<div class="a" style="left:857px;top:644px;width:120px;height:20px;background:#ebebeb;"></div>
<svg class="a" style="left:966.0px;top:652.2px" width="7" height="4" viewBox="0 0 7 4"><path d="M0 0 H7 L3.5 4.2 Z" fill="#b0b4c0"/></svg>
<div class="a t" style="left:859.25px;top:644px;line-height:20px;letter-spacing:-0.083px;">(Non impostato)</div>
<div class="a t" style="left:300.2px;top:669px;line-height:20px;letter-spacing:-0.118px;">2</div>
<div class="a" style="left:333px;top:668px;width:116px;height:20px;background:#ebebeb;"></div>
<svg class="a" style="left:438.0px;top:676.2px" width="7" height="4" viewBox="0 0 7 4"><path d="M0 0 H7 L3.5 4.2 Z" fill="#b0b4c0"/></svg>
<div class="a t" style="left:335.25px;top:668px;line-height:20px;letter-spacing:0.004px;">Contanti</div>
<div class="a" style="left:453px;top:668px;width:48px;height:20px;background:#ebebeb;"></div>
<div class="a t" style="right:1419.55px;top:668px;line-height:20px;letter-spacing:0.148px;">0,00</div>
<div class="a" style="left:505px;top:668px;width:112px;height:20px;background:#ebebeb;"></div>
<svg class="a" style="left:606.0px;top:676.2px" width="7" height="4" viewBox="0 0 7 4"><path d="M0 0 H7 L3.5 4.2 Z" fill="#b0b4c0"/></svg>
<div class="a t" style="left:507.25px;top:668px;line-height:20px;letter-spacing:-0.113px;">Totale Doc.</div>
<div class="a" style="left:621px;top:668px;width:28px;height:20px;background:#ebebeb;"></div>
<div class="a t" style="right:1271.82px;top:668px;line-height:20px;letter-spacing:-0.118px;">0</div>
<div class="a" style="left:653px;top:668px;width:200px;height:20px;background:#ebebeb;"></div>
<div class="a" style="left:857px;top:668px;width:120px;height:20px;background:#ebebeb;"></div>
<svg class="a" style="left:966.0px;top:676.2px" width="7" height="4" viewBox="0 0 7 4"><path d="M0 0 H7 L3.5 4.2 Z" fill="#b0b4c0"/></svg>
<div class="a t" style="left:859.25px;top:668px;line-height:20px;letter-spacing:-0.083px;">(Non impostato)</div>
<div class="a t" style="left:300.2px;top:693px;line-height:20px;letter-spacing:-0.118px;">3</div>
<div class="a" style="left:333px;top:692px;width:116px;height:20px;background:#ebebeb;"></div>
<svg class="a" style="left:438.0px;top:700.2px" width="7" height="4" viewBox="0 0 7 4"><path d="M0 0 H7 L3.5 4.2 Z" fill="#b0b4c0"/></svg>
<div class="a t" style="left:335.25px;top:692px;line-height:20px;letter-spacing:0.004px;">Contanti</div>
<div class="a" style="left:453px;top:692px;width:48px;height:20px;background:#ebebeb;"></div>
<div class="a t" style="right:1419.55px;top:692px;line-height:20px;letter-spacing:0.148px;">0,00</div>
<div class="a" style="left:505px;top:692px;width:112px;height:20px;background:#ebebeb;"></div>
<svg class="a" style="left:606.0px;top:700.2px" width="7" height="4" viewBox="0 0 7 4"><path d="M0 0 H7 L3.5 4.2 Z" fill="#b0b4c0"/></svg>
<div class="a t" style="left:507.25px;top:692px;line-height:20px;letter-spacing:-0.113px;">Totale Doc.</div>
<div class="a" style="left:621px;top:692px;width:28px;height:20px;background:#ebebeb;"></div>
<div class="a t" style="right:1271.82px;top:692px;line-height:20px;letter-spacing:-0.118px;">0</div>
<div class="a" style="left:653px;top:692px;width:200px;height:20px;background:#ebebeb;"></div>
<div class="a" style="left:857px;top:692px;width:120px;height:20px;background:#ebebeb;"></div>
<svg class="a" style="left:966.0px;top:700.2px" width="7" height="4" viewBox="0 0 7 4"><path d="M0 0 H7 L3.5 4.2 Z" fill="#b0b4c0"/></svg>
<div class="a t" style="left:859.25px;top:692px;line-height:20px;letter-spacing:-0.083px;">(Non impostato)</div>
<div class="a t" style="left:300.2px;top:717px;line-height:20px;letter-spacing:-0.118px;">4</div>
<div class="a" style="left:333px;top:716px;width:116px;height:20px;background:#ebebeb;"></div>
<svg class="a" style="left:438.0px;top:724.2px" width="7" height="4" viewBox="0 0 7 4"><path d="M0 0 H7 L3.5 4.2 Z" fill="#b0b4c0"/></svg>
<div class="a t" style="left:335.25px;top:716px;line-height:20px;letter-spacing:0.004px;">Contanti</div>
<div class="a" style="left:453px;top:716px;width:48px;height:20px;background:#ebebeb;"></div>
<div class="a t" style="right:1419.55px;top:716px;line-height:20px;letter-spacing:0.148px;">0,00</div>
<div class="a" style="left:505px;top:716px;width:112px;height:20px;background:#ebebeb;"></div>
<svg class="a" style="left:606.0px;top:724.2px" width="7" height="4" viewBox="0 0 7 4"><path d="M0 0 H7 L3.5 4.2 Z" fill="#b0b4c0"/></svg>
<div class="a t" style="left:507.25px;top:716px;line-height:20px;letter-spacing:-0.113px;">Totale Doc.</div>
<div class="a" style="left:621px;top:716px;width:28px;height:20px;background:#ebebeb;"></div>
<div class="a t" style="right:1271.82px;top:716px;line-height:20px;letter-spacing:-0.118px;">0</div>
<div class="a" style="left:653px;top:716px;width:200px;height:20px;background:#ebebeb;"></div>
<div class="a" style="left:857px;top:716px;width:120px;height:20px;background:#ebebeb;"></div>
<svg class="a" style="left:966.0px;top:724.2px" width="7" height="4" viewBox="0 0 7 4"><path d="M0 0 H7 L3.5 4.2 Z" fill="#b0b4c0"/></svg>
<div class="a t" style="left:859.25px;top:716px;line-height:20px;letter-spacing:-0.083px;">(Non impostato)</div>
<div class="a t" style="left:300.2px;top:741px;line-height:20px;letter-spacing:-0.118px;">5</div>
<div class="a" style="left:333px;top:740px;width:116px;height:20px;background:#ebebeb;"></div>
<svg class="a" style="left:438.0px;top:748.2px" width="7" height="4" viewBox="0 0 7 4"><path d="M0 0 H7 L3.5 4.2 Z" fill="#b0b4c0"/></svg>
<div class="a t" style="left:335.25px;top:740px;line-height:20px;letter-spacing:0.004px;">Contanti</div>
<div class="a" style="left:453px;top:740px;width:48px;height:20px;background:#ebebeb;"></div>
<div class="a t" style="right:1419.55px;top:740px;line-height:20px;letter-spacing:0.148px;">0,00</div>
<div class="a" style="left:505px;top:740px;width:112px;height:20px;background:#ebebeb;"></div>
<svg class="a" style="left:606.0px;top:748.2px" width="7" height="4" viewBox="0 0 7 4"><path d="M0 0 H7 L3.5 4.2 Z" fill="#b0b4c0"/></svg>
<div class="a t" style="left:507.25px;top:740px;line-height:20px;letter-spacing:-0.113px;">Totale Doc.</div>
<div class="a" style="left:621px;top:740px;width:28px;height:20px;background:#ebebeb;"></div>
<div class="a t" style="right:1271.82px;top:740px;line-height:20px;letter-spacing:-0.118px;">0</div>
<div class="a" style="left:653px;top:740px;width:200px;height:20px;background:#ebebeb;"></div>
<div class="a" style="left:857px;top:740px;width:120px;height:20px;background:#ebebeb;"></div>
<svg class="a" style="left:966.0px;top:748.2px" width="7" height="4" viewBox="0 0 7 4"><path d="M0 0 H7 L3.5 4.2 Z" fill="#b0b4c0"/></svg>
<div class="a t" style="left:859.25px;top:740px;line-height:20px;letter-spacing:-0.083px;">(Non impostato)</div>
<div class="a t" style="left:300.2px;top:765px;line-height:20px;letter-spacing:-0.118px;">6</div>
<div class="a" style="left:333px;top:764px;width:116px;height:20px;background:#ebebeb;"></div>
<svg class="a" style="left:438.0px;top:772.2px" width="7" height="4" viewBox="0 0 7 4"><path d="M0 0 H7 L3.5 4.2 Z" fill="#b0b4c0"/></svg>
<div class="a t" style="left:335.25px;top:764px;line-height:20px;letter-spacing:0.004px;">Contanti</div>
<div class="a" style="left:453px;top:764px;width:48px;height:20px;background:#ebebeb;"></div>
<div class="a t" style="right:1419.55px;top:764px;line-height:20px;letter-spacing:0.148px;">0,00</div>
<div class="a" style="left:505px;top:764px;width:112px;height:20px;background:#ebebeb;"></div>
<svg class="a" style="left:606.0px;top:772.2px" width="7" height="4" viewBox="0 0 7 4"><path d="M0 0 H7 L3.5 4.2 Z" fill="#b0b4c0"/></svg>
<div class="a t" style="left:507.25px;top:764px;line-height:20px;letter-spacing:-0.113px;">Totale Doc.</div>
<div class="a" style="left:621px;top:764px;width:28px;height:20px;background:#ebebeb;"></div>
<div class="a t" style="right:1271.82px;top:764px;line-height:20px;letter-spacing:-0.118px;">0</div>
<div class="a" style="left:653px;top:764px;width:200px;height:20px;background:#ebebeb;"></div>
<div class="a" style="left:857px;top:764px;width:120px;height:20px;background:#ebebeb;"></div>
<svg class="a" style="left:966.0px;top:772.2px" width="7" height="4" viewBox="0 0 7 4"><path d="M0 0 H7 L3.5 4.2 Z" fill="#b0b4c0"/></svg>
<div class="a t" style="left:859.25px;top:764px;line-height:20px;letter-spacing:-0.083px;">(Non impostato)</div>
<div class="a" style="left:294px;top:828px;width:799px;height:120px;box-sizing:border-box;border-top:1px solid #2a5b74;border-right:1px solid #2a5b74;border-bottom:1px solid #2a5b74;"></div>
<div class="a" style="left:294px;top:848px;width:799px;height:1px;background:#2a5b74;"></div>
<div class="a pt" style="left:299.5px;top:829px;line-height:20px;letter-spacing:-0.455px;">VARIE 2</div>
<div class="a" style="left:1071px;top:837px;width:11px;height:1px;background:#2a5b74;height:1.3px;"></div>
<div class="a t" style="left:299.5px;top:877px;line-height:20px;letter-spacing:0.028px;">Cod. proc. esterna</div>
<div class="a" style="left:425px;top:876px;width:320px;height:20px;background:#f1f9fe;"></div>
<div class="a" style="left:1101px;top:828px;width:800px;height:120px;box-sizing:border-box;border-top:1px solid #2a5b74;border-right:1px solid #2a5b74;border-bottom:1px solid #2a5b74;border-left:1px solid #2a5b74;"></div>
<div class="a" style="left:1101px;top:848px;width:800px;height:1px;background:#2a5b74;"></div>
<div class="a pt" style="left:1107px;top:829px;line-height:20px;letter-spacing:-0.556px;">STAMPA SCONTRINI (WPOS)</div>
<div class="a" style="left:1879px;top:837px;width:11px;height:1px;background:#2a5b74;height:1.3px;"></div>
<div class="a t" style="left:1107.5px;top:853px;line-height:20px;letter-spacing:-0.123px;">Tipo credito</div>
<div class="a t" style="left:1107.5px;top:877px;line-height:20px;letter-spacing:-0.126px;">Tipo buono pasto</div>
<div class="a t" style="left:1107.5px;top:901px;line-height:20px;letter-spacing:-0.213px;">Comando in deroga</div>
<div class="a" style="left:1233px;top:852px;width:320px;height:20px;background:#ebebeb;"></div>
<svg class="a" style="left:1542.0px;top:860.2px" width="7" height="4" viewBox="0 0 7 4"><path d="M0 0 H7 L3.5 4.2 Z" fill="#b0b4c0"/></svg>
<div class="a t" style="left:1238.25px;top:852px;line-height:20px;letter-spacing:-0.009px;">- Non definito -</div>
<div class="a" style="left:1233px;top:876px;width:320px;height:20px;background:#ebebeb;"></div>
<svg class="a" style="left:1542.0px;top:884.2px" width="7" height="4" viewBox="0 0 7 4"><path d="M0 0 H7 L3.5 4.2 Z" fill="#b0b4c0"/></svg>
<div class="a t" style="left:1238.25px;top:876px;line-height:20px;letter-spacing:-0.009px;">- Non definito -</div>
<div class="a" style="left:1233px;top:900px;width:320px;height:20px;background:#f1f9fe;"></div>
<div class="a t" style="left:1107.5px;top:925px;line-height:20px;letter-spacing:-0.08px;">Il comando in deroga sostituisce il default definito nelle opzioni di registro.</div>
</body></html>
